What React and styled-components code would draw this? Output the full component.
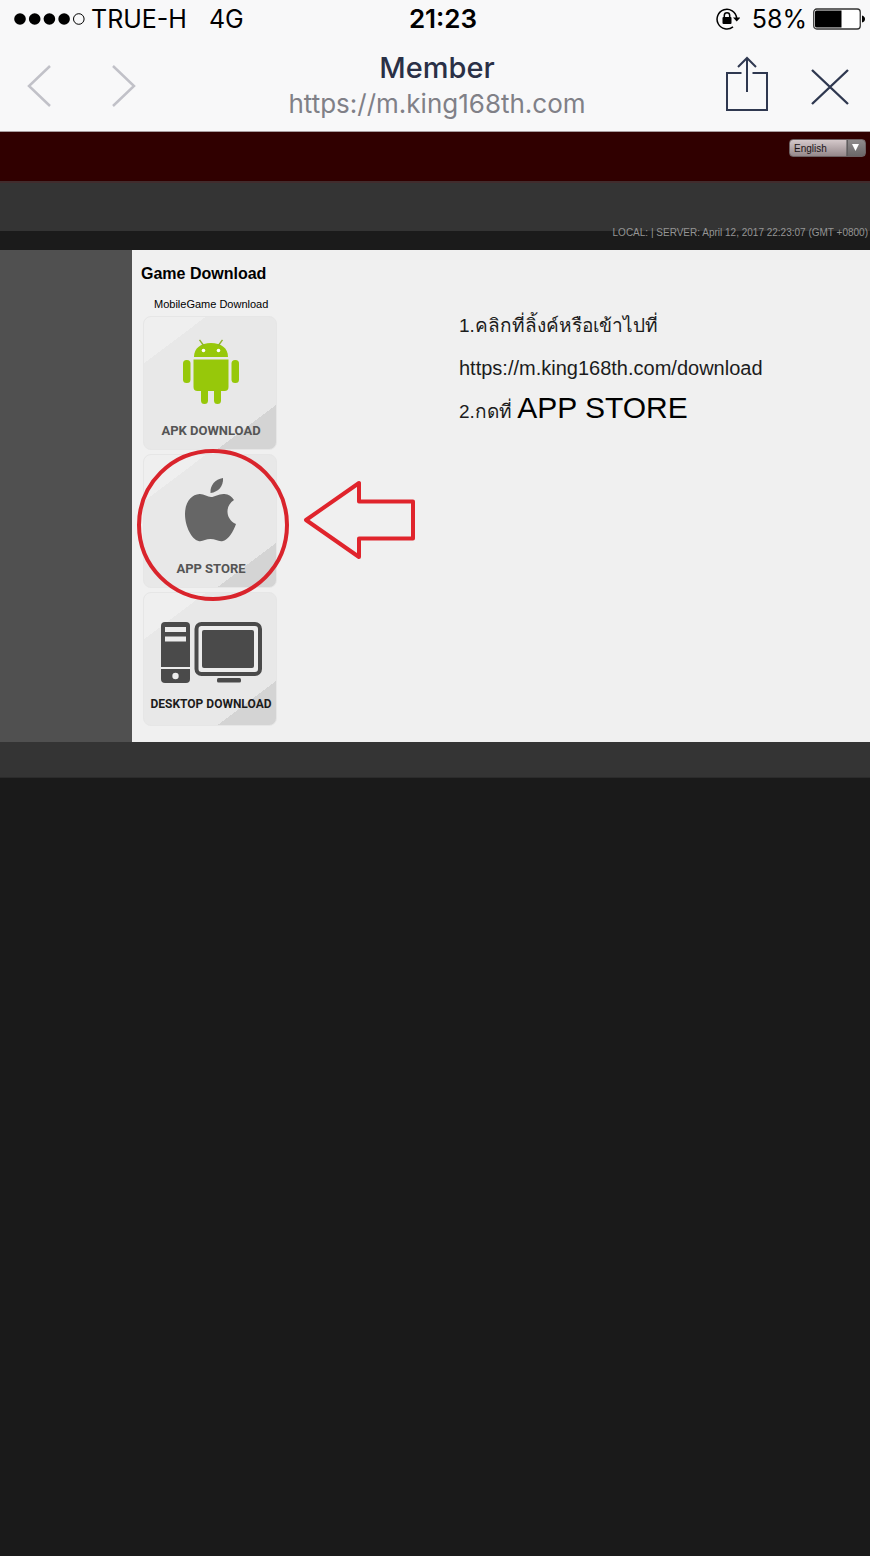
import React from 'react';
import styled, { createGlobalStyle } from 'styled-components';

const GlobalStyle = createGlobalStyle`
  *, *::before, *::after { box-sizing: border-box; }
  html, body { margin: 0; background: #1a1a1a; }
  body { font-family: "Liberation Sans", Arial, sans-serif; color: #000; }
  svg { display: block; }
`;

const BrowserChrome = styled.header`
  background: #f8f8f9;
  border-bottom: 1px solid #a99ea0;
  font-family: Inter, sans-serif;
`;

const StatusBar = styled.div`
  display: grid;
  grid-template-columns: 1fr auto 1fr;
  align-items: center;
  height: 38px;
  padding: 0 5px 0 14px;
  font-size: 25px;
  line-height: 38px;
`;

const StatusGroup = styled.div`
  display: flex;
  align-items: center;
  justify-content: ${({ $end }) => ($end ? 'flex-end' : 'flex-start')};
  gap: 6px;
`;

const Network = styled.span`
  margin-left: 16px;
`;

const RotationLock = styled.svg`
  margin-right: 6px;
`;

const Clock = styled.time`
  padding-left: 7px;
  font-size: 26px;
  font-weight: 600;
`;

const NavBar = styled.nav`
  display: grid;
  grid-template-columns: 1fr auto 1fr;
  align-items: center;
  height: 93px;
  padding: 3px 20px 0 24px;
`;

const NavGroup = styled.div`
  display: flex;
  align-items: center;
  justify-content: ${({ $end }) => ($end ? 'flex-end' : 'flex-start')};
  gap: ${({ $end }) => ($end ? '42px' : '55px')};
`;

const IconButton = styled.button`
  padding: 0;
  border: 0;
  background: none;
  color: ${({ $muted }) => ($muted ? '#c1c1c8' : '#2f3850')};
`;

const PageTitle = styled.div`
  text-align: center;
`;

const SiteName = styled.div`
  font-size: 29px;
  font-weight: 500;
  line-height: 36px;
  color: #2a3046;
`;

const Address = styled.div`
  font-size: 26px;
  line-height: 36px;
  color: #808087;
`;

const TopBar = styled.div`
  display: flex;
  justify-content: flex-end;
  align-items: flex-start;
  height: 49px;
  padding: 7px 4px 0;
  background: #300000;
`;

const LanguageField = styled.label`
  position: relative;
  display: flex;
  width: 77px;
  height: 18px;
`;

const LanguageSelect = styled.select`
  appearance: none;
  width: 100%;
  padding: 0 20px 0 4px;
  border: 1px solid #6d6163;
  border-radius: 4px;
  background:
    linear-gradient(90deg, transparent 57px, #605c5e 57px, #605c5e 58px, transparent 58px),
    linear-gradient(#8f8b8c, #6a6768) right / 19px 100% no-repeat,
    linear-gradient(#d4c8ca, #95888b);
  font-family: "Liberation Sans", Arial, sans-serif;
  font-size: 10px;
  color: #1c1416;
`;

const SelectArrow = styled.svg`
  position: absolute;
  top: 5px;
  right: 7px;
  pointer-events: none;
`;

const ServerBar = styled.div`
  display: flex;
  justify-content: flex-end;
  align-items: flex-end;
  height: 69px;
  padding: 0 2px 11px;
  border-top: 2px solid #412c2d;
  background: linear-gradient(#343434 48px, #1b1b1b 48px);
  font-size: 10px;
  line-height: 12px;
  color: #949494;
`;

const Body = styled.div`
  padding-left: 132px;
  background: #505050;
`;

const Content = styled.main`
  display: flex;
  align-items: flex-start;
  gap: 182px;
  padding: 14px 8px 16px 9px;
  background: #f0f0f0;
`;

const Downloads = styled.section`
  flex: none;
  width: 136px;
`;

const Heading = styled.h1`
  margin: 0 0 12px;
  font-size: 16px;
  line-height: 20px;
  white-space: nowrap;
`;

const SubHeading = styled.h2`
  margin: 0 0 4px 13px;
  font-size: 11px;
  font-weight: 400;
  line-height: 16px;
  white-space: nowrap;
`;

const CardList = styled.div`
  display: flex;
  flex-direction: column;
  gap: 4px;
  padding-left: 2px;
`;

const CardSlot = styled.div`
  position: relative;
`;

const Card = styled.a`
  display: flex;
  flex-direction: column;
  align-items: center;
  justify-content: flex-end;
  gap: ${({ $gap }) => $gap};
  height: 134px;
  padding: 0 0 ${({ $bottom }) => $bottom} 2px;
  border: 1px solid #e6e6e6;
  border-radius: 8px;
  background:
    linear-gradient(143deg, transparent 81%, #d4d4d4 81%),
    linear-gradient(143deg, #efefef 20%, transparent 20%),
    #e8e8e8;
  font-family: Roboto, sans-serif;
  font-size: ${({ $size }) => $size};
  font-weight: 700;
  line-height: 18px;
  color: ${({ $ink }) => $ink};
  text-decoration: none;
  white-space: nowrap;
`;

const Highlight = styled.svg`
  position: absolute;
  top: -5px;
  left: -6px;
  pointer-events: none;
`;

const Pointer = styled.svg`
  position: absolute;
  top: 26px;
  left: 160px;
  pointer-events: none;
`;

const Instructions = styled.section`
  padding-top: 40px;
  font-size: 19px;
  color: #1c1c1c;
`;

const Step = styled.p`
  margin: 0;
  line-height: 43px;
  white-space: nowrap;
`;

const LinkStep = styled(Step)`
  font-size: 20px;
  a { color: inherit; text-decoration: none; }
`;

const StoreStep = styled(Step)`
  line-height: 36px;
  strong { font-size: 30px; font-weight: 400; color: #000; }
`;

const Footer = styled.footer`
  height: 36px;
  background: #343434;
  border-bottom: 1px solid #2b2b2b;
`;

function SignalDots() {
  return (
    <svg width="71" height="12" viewBox="0 0 71 12" aria-label="Signal strength">
      {[6, 20.7, 35.4, 50.1].map((x) => <circle key={x} cx={x} cy="6" r="5.8" />)}
      <circle cx="64.8" cy="6" r="5.3" fill="none" stroke="#000" strokeWidth="1" />
    </svg>
  );
}

function Chevron({ back }) {
  return (
    <svg width="30" height="44" viewBox="0 0 30 44" fill="none" stroke="currentColor" strokeWidth="2.5">
      <path d={back ? 'M26 2 5 22 26 42' : 'M4 2 25 22 4 42'} />
    </svg>
  );
}

function AndroidIcon() {
  return (
    <svg width="56" height="65" viewBox="0 0 56 65" fill="#97c80a">
      <path d="M11 18C11 9 18 4 28 4s17 5 17 14z" />
      <path d="M16.5.8 21 7M39.5.8 35 7" stroke="#8fb52a" strokeWidth="1.4" />
      <circle cx="20.5" cy="11.5" r="1.8" fill="#fff" />
      <circle cx="35.5" cy="11.5" r="1.8" fill="#fff" />
      <path d="M10.5 20.5h35V48a4 4 0 0 1-4 4H38v9.500a3.500 3.500 0 0 1-7 0V52h-6v9.500a3.500 3.500 0 0 1-7 0V52h-3.500a4 4 0 0 1-4-4z" />
      <rect x="0" y="21" width="7.500" height="23" rx="3.500" />
      <rect x="48.500" y="21" width="7.500" height="23" rx="3.500" />
    </svg>
  );
}

function AppleIcon() {
  return (
    <svg width="52" height="64" viewBox="0 0 52 64" fill="#666">
      <path d="M25.500 15C25 7 30 1.500 38 0c.6 8-4.500 14-12.500 15z" />
      <path d="M26 19c4 0 8-3.500 13.500-3 4 .4 7.500 2.500 9.500 6-9 5.500-9 19 2 24-2.500 7.500-7.500 15.500-13 17-4.500 1-7.500-2-12.500-2s-8 3-12 2C7 61.500 0 49 0 36 0 24 6.500 16.500 14.500 16 19 15.800 22.500 19 26 19z" />
    </svg>
  );
}

function DesktopIcon() {
  return (
    <svg width="101" height="61" viewBox="0 0 101 61" fill="#4a4a4a">
      <rect width="29" height="61" rx="4" />
      <rect x="4" y="5" width="21" height="5" fill="#ececec" />
      <rect x="4" y="14.500" width="21" height="5" fill="#ececec" />
      <rect y="45" width="29" height="2" fill="#ececec" />
      <circle cx="14.500" cy="54" r="3.200" fill="#ececec" />
      <rect x="35.500" y="2" width="63.500" height="50" rx="5" fill="#ececec" stroke="#4a4a4a" strokeWidth="4" />
      <rect x="41" y="8" width="52" height="38" rx="2" />
      <rect x="56" y="56" width="24" height="4.500" rx="1.500" />
    </svg>
  );
}

export default function App() {
  return (
    <>
      <GlobalStyle />
      <BrowserChrome>
        <StatusBar>
          <StatusGroup>
            <SignalDots />
            <span>TRUE-H</span>
            <Network>4G</Network>
          </StatusGroup>
          <Clock>21:23</Clock>
          <StatusGroup $end>
            <RotationLock width="24" height="22" viewBox="0 0 24 22" fill="none" stroke="#000" strokeWidth="1.5" aria-label="Rotation lock">
              <path d="M17 18.800A9.800 9.800 0 1 1 20.600 10" />
              <path d="M17 9.500h7.500L20.700 13.500z" fill="#000" stroke="none" />
              <rect x="6.500" y="9" width="9" height="7" rx="1" fill="#000" stroke="none" />
              <path d="M8.300 9.500V7.500a2.700 2.700 0 0 1 5.400 0v2" />
            </RotationLock>
            <span>58%</span>
            <svg width="52" height="22" viewBox="0 0 52 22" aria-label="Battery">
              <rect x=".75" y="1" width="46.500" height="20" rx="3" fill="#fff" stroke="#333" strokeWidth="1.3" />
              <path d="M3.500 2.500H28.500V19.500H3.500Q2 19.500 2 18V4Q2 2.500 3.500 2.500z" />
              <path d="M49 7.500q3 1 3 3.500t-3 3.500z" />
            </svg>
          </StatusGroup>
        </StatusBar>
        <NavBar>
          <NavGroup>
            <IconButton $muted aria-label="Back"><Chevron back /></IconButton>
            <IconButton $muted aria-label="Forward"><Chevron /></IconButton>
          </NavGroup>
          <PageTitle>
            <SiteName>Member</SiteName>
            <Address>https://m.king168th.com</Address>
          </PageTitle>
          <NavGroup $end>
            <IconButton aria-label="Share">
              <svg width="42" height="60" viewBox="0 0 42 60" fill="none" stroke="currentColor" strokeWidth="2">
                <path d="M15.500 17H1V54H41V17H26.500M21 36V2M12 11 21 2 30 11" />
              </svg>
            </IconButton>
            <IconButton aria-label="Close">
              <svg width="40" height="38" viewBox="0 0 40 38" fill="none" stroke="currentColor" strokeWidth="2.400">
                <path d="M2 3 38 37M38 3 2 37" />
              </svg>
            </IconButton>
          </NavGroup>
        </NavBar>
      </BrowserChrome>

      <TopBar>
        <LanguageField>
          <LanguageSelect aria-label="Language" defaultValue="en">
            <option value="en">English</option>
          </LanguageSelect>
          <SelectArrow width="7" height="7" viewBox="0 0 7 7" fill="#fff"><path d="M0 0h7L3.500 7z" /></SelectArrow>
        </LanguageField>
      </TopBar>
      <ServerBar>LOCAL: | SERVER: April 12, 2017 22:23:07 (GMT +0800)</ServerBar>

      <Body>
        <Content>
          <Downloads>
            <Heading>Game Download</Heading>
            <SubHeading>MobileGame Download</SubHeading>
            <CardList>
              <Card href="#apk" $size="13px" $ink="#555" $gap="18px" $bottom="9px">
                <AndroidIcon />
                APK DOWNLOAD
              </Card>
              <CardSlot>
                <Card href="#app-store" $size="13px" $ink="#555" $gap="18px" $bottom="9px">
                  <AppleIcon />
                  APP STORE
                </Card>
                <Highlight width="152" height="152" viewBox="0 0 152 152" fill="none" stroke="#d9242c" strokeWidth="4">
                  <circle cx="76" cy="76" r="74" />
                </Highlight>
                <Pointer width="112" height="80" viewBox="0 0 112 80" fill="none" stroke="#e0242c" strokeWidth="4" strokeLinejoin="round">
                  <path d="M3 40 56 3V21.500H110V58.500H56V77z" />
                </Pointer>
              </CardSlot>
              <Card href="#desktop" $size="12px" $ink="#1c1c1c" $gap="12px" $bottom="12px">
                <DesktopIcon />
                DESKTOP DOWNLOAD
              </Card>
            </CardList>
          </Downloads>
          <Instructions>
            <Step>1.คลิกที่ลิ้งค์หรือเข้าไปที่</Step>
            <LinkStep><a href="https://m.king168th.com/download">https://m.king168th.com/download</a></LinkStep>
            <StoreStep>2.กดที่ <strong>APP STORE</strong></StoreStep>
          </Instructions>
        </Content>
      </Body>
      <Footer />
    </>
  );
}
